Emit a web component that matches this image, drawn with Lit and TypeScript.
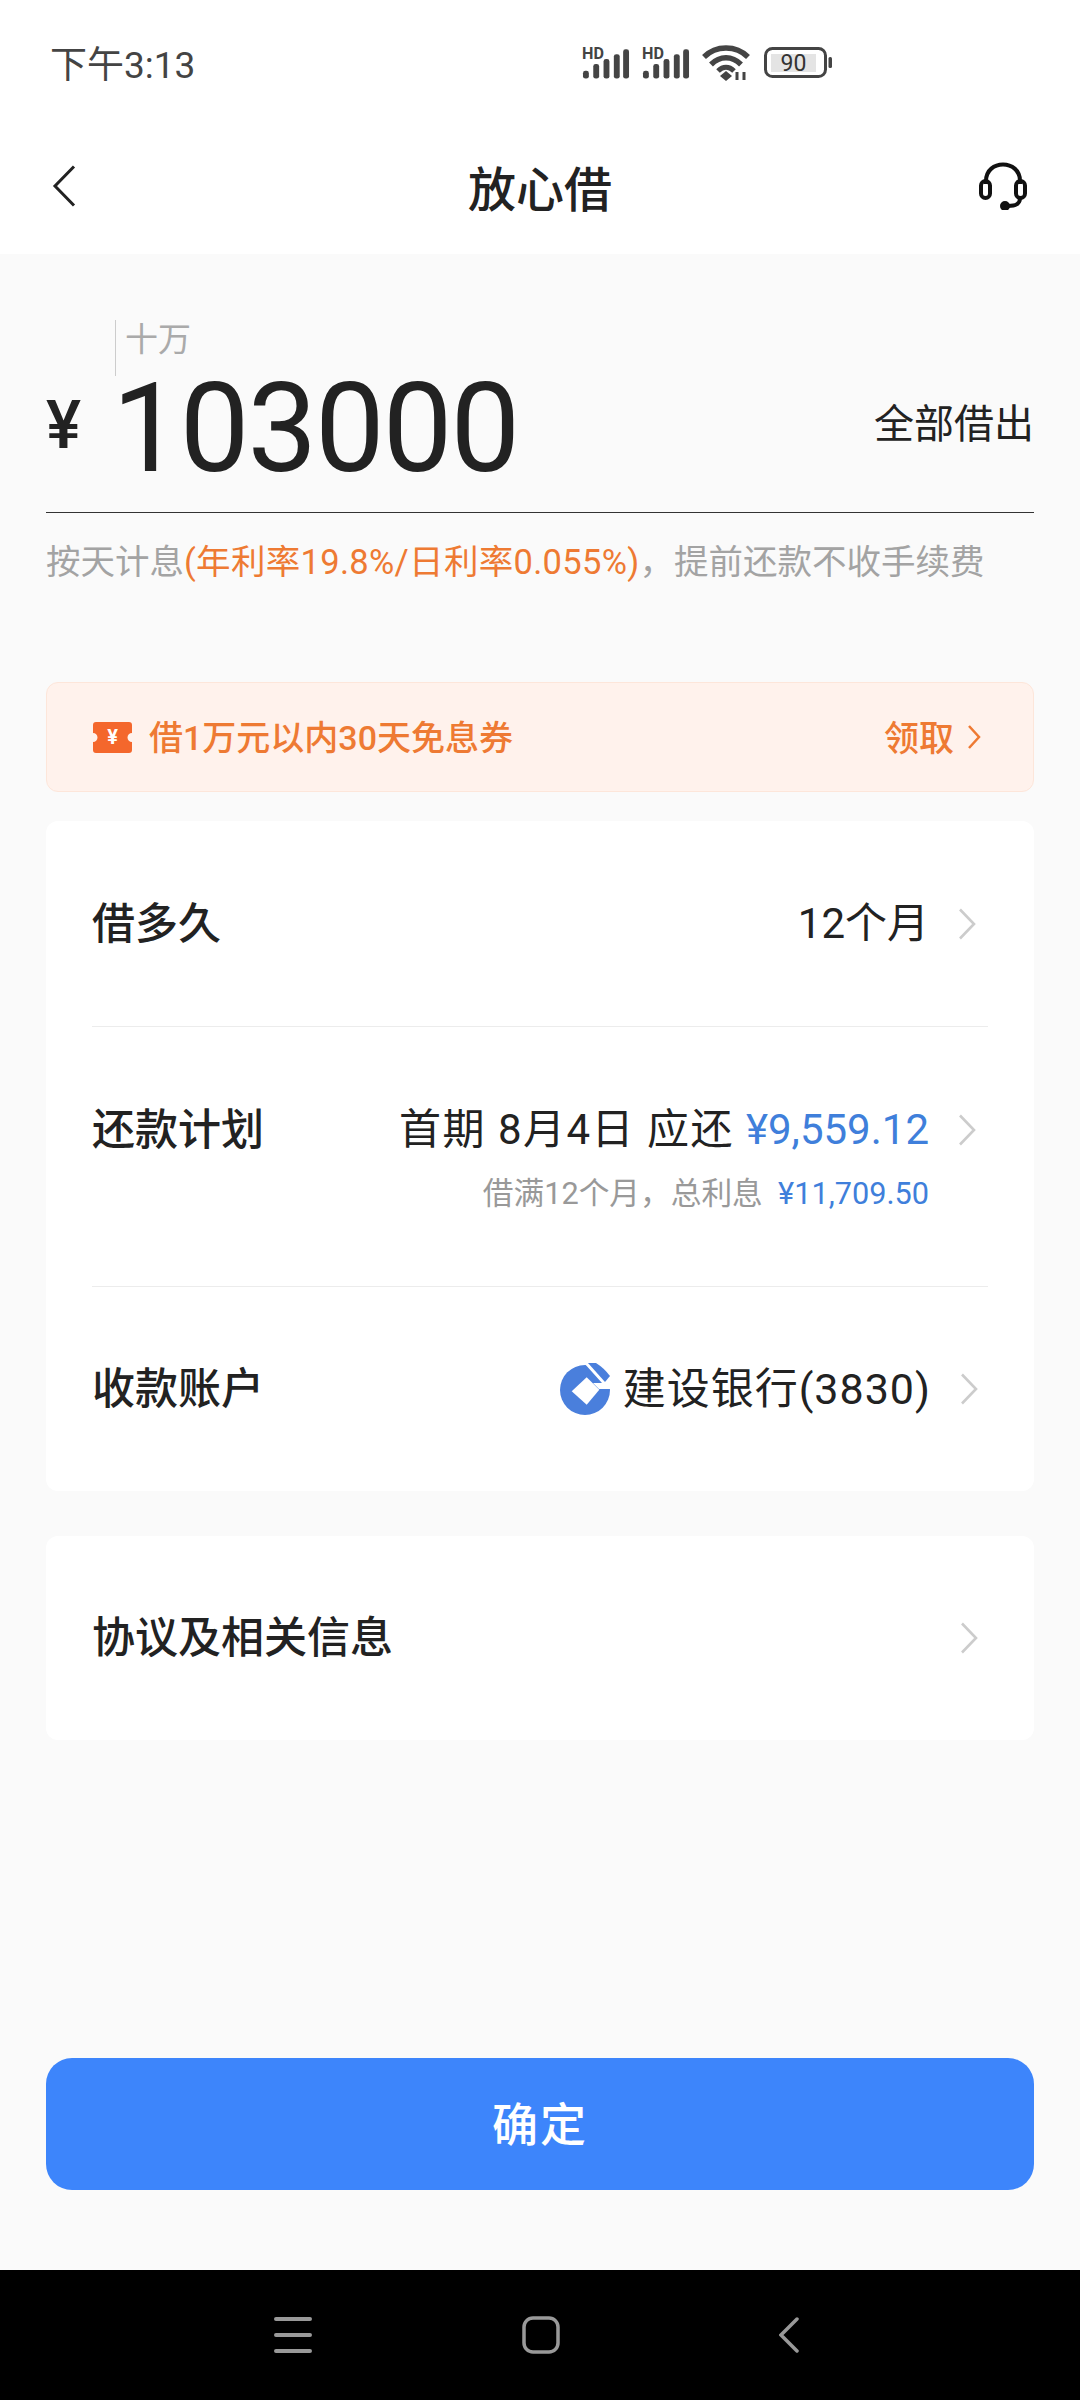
import {LitElement, html, css, svg} from "lit";
import {customElement} from "lit/decorators.js";

const chevron = html`<svg class="chev" width="18" height="32" viewBox="0 0 18 32"><path d="M2 1.500 16 16 2 30.500" fill="none" stroke="#ccc" stroke-width="2.600"/></svg>`;

const signalBars = svg`
    <rect x="1" y="25" width="6" height="8" rx="2.500" fill="#444"/>
    <rect x="11.500" y="18" width="6" height="15" rx="2.500" fill="#444"/>
    <rect x="22" y="13" width="6" height="20" rx="2.500" fill="#444"/>
    <rect x="32.500" y="8" width="6" height="25" rx="2.500" fill="#444"/>
    <rect x="42" y="3" width="6" height="30" rx="2.500" fill="#444"/>
    <text x="0" y="13" font-family="Roboto, sans-serif" font-weight="700" font-size="16.500" fill="#444">HD</text>`;

@customElement("app-root")
export class AppRoot extends LitElement {
    static styles = css`
        :host {
            display: flex;
            flex-direction: column;
            width: 1080px;
            height: 2400px;
            background: #fafafa;
            font-family: Roboto, "Noto Sans CJK SC", sans-serif;
            color: #222;
        }

        .top {
            background: #fff;
            height: 254px;
            flex: none;
        }

        .status {
            display: flex;
            align-items: center;
            height: 126px;
            box-sizing: border-box;
            padding-left: 50px;
            color: #444;
            font-size: 37px;
        }

        .status .time {
            margin-bottom: 3px;
        }

        .status-icons {
            display: flex;
            align-items: center;
            margin-left: 387px;
            gap: 12px;
        }

        .status-icons .signal {
            margin-bottom: 6px;
        }

        .status-icons .battery {
            margin-left: 2px;
        }

        .nav {
            display: grid;
            grid-template-columns: 1fr auto 1fr;
            align-items: center;
            height: 124px;
            box-sizing: border-box;
            padding: 0 52px 5px 52px;
        }

        .nav .support {
            justify-self: end;
        }

        .title {
            font-size: 48px;
            font-weight: 500;
        }

        .main {
            flex: 1;
            display: flex;
            flex-direction: column;
            padding: 0 46px;
        }

        .amount {
            position: relative;
            display: flex;
            align-items: flex-end;
            height: 259px;
            padding-bottom: 38px;
            box-sizing: border-box;
            border-bottom: 1.500px solid #333;
        }

        .cursor {
            position: absolute;
            left: 69px;
            top: 66px;
            width: 1px;
            height: 56px;
            background: #ccc;
        }

        .unit {
            position: absolute;
            left: 79px;
            top: 64px;
            font-size: 33px;
            line-height: 44px;
            color: #aaa;
        }

        .yen {
            font-size: 66px;
            font-weight: 500;
            line-height: 62px;
            margin-bottom: 17px;
            width: 66px;
        }

        .digits {
            font-size: 124px;
            line-height: 90px;
            letter-spacing: -2px;
            font-weight: 400;
        }

        .all {
            margin-left: auto;
            font-size: 40px;
            line-height: 62px;
            margin-bottom: 18px;
        }

        .rate {
            font-size: 34.500px;
            line-height: 50px;
            margin-top: 24px;
            color: #a3a3a3;
            white-space: nowrap;
        }

        .rate b {
            font-weight: 400;
            color: #ee7a33;
            letter-spacing: 0.300px;
        }

        .coupon {
            display: flex;
            align-items: center;
            height: 110px;
            box-sizing: border-box;
            margin-top: 95px;
            padding: 0 52px 0 46px;
            background: #fff2ec;
            border: 1.500px solid #fde6da;
            border-radius: 12px;
            color: #ee7a33;
            font-size: 34px;
            font-weight: 500;
        }

        .coupon span {
            margin-bottom: 4px;
        }

        .coupon svg.ticket {
            margin-right: 17px;
        }

        .coupon .get {
            margin-left: auto;
            margin-right: 13px;
            font-size: 35px;
        }

        .card {
            background: #fff;
            border-radius: 12px;
            padding: 0 46px;
        }

        .card.first {
            margin-top: 29px;
        }

        .card.second {
            margin-top: 45px;
        }

        .row {
            display: flex;
            align-items: center;
            height: 204px;
            border-bottom: 1.500px solid #ececec;
            box-sizing: border-box;
        }

        .row.how-long {
            height: 206px;
        }

        .row:last-child {
            border-bottom: none;
        }

        .row.plan {
            height: 260px;
            align-items: flex-start;
            padding-top: 75px;
        }

        .label {
            font-size: 43px;
            font-weight: 500;
            line-height: 56px;
        }

        .right {
            margin-left: auto;
            display: flex;
            align-items: center;
            font-size: 42px;
            line-height: 56px;
        }

        .right .chev {
            margin-left: 29px;
            margin-right: 12px;
        }

        .right.account .chev {
            margin-right: 10px;
        }

        .bank-name {
            font-size: 43px;
            letter-spacing: 1px;
        }

        .blue {
            color: #3f7fdb;
        }

        .plan-col {
            margin-left: auto;
            display: grid;
            grid-template-columns: auto auto;
            justify-items: end;
            row-gap: 15px;
        }

        .plan-col .chev {
            margin-left: 29px;
            margin-right: 12px;
            align-self: center;
        }

        .plan-main {
            font-size: 42px;
            line-height: 56px;
            white-space: pre;
        }

        .plan-main .due {
            letter-spacing: 1.500px;
        }

        .plan-sub {
            font-size: 30.700px;
            line-height: 42px;
            color: #999;
            white-space: pre;
        }

        .bank {
            display: block;
            margin-right: 13px;
        }

        .confirm {
            margin-top: auto;
            margin-bottom: 80px;
            height: 132px;
            box-sizing: border-box;
            padding-bottom: 6px;
            display: flex;
            align-items: center;
            justify-content: center;
            background: #3d85fb;
            border-radius: 26px;
            color: #fff;
            font-size: 46px;
            font-weight: 500;
            letter-spacing: 2px;
        }

        .softkeys {
            flex: none;
            height: 130px;
            box-sizing: border-box;
            padding-left: 274px;
            background: #000;
            display: flex;
            align-items: center;
            gap: 210px;
        }

        .softkeys .back {
            margin-left: 9px;
        }
    `;

    render() {
        return html`
            <div class="top">
                <div class="status">
                    <span class="time">下午3:13</span>
                    <div class="status-icons">
                        <svg class="signal" width="48" height="41" viewBox="0 -6 49 41">${signalBars}</svg>
                        <svg class="signal" width="48" height="41" viewBox="0 -6 49 41">${signalBars}</svg>
                        <svg width="48" height="36" viewBox="0 0 48 36">
                            <path d="M2 12C14 0 34 0 46 12" fill="none" stroke="#444" stroke-width="5.500"/>
                            <path d="M9 19.500C18 10.500 30 10.500 39 19.500" fill="none" stroke="#444" stroke-width="5.500"/>
                            <path d="M16 26C21 21 27 21 32 26" fill="none" stroke="#444" stroke-width="5"/>
                            <path d="M24 26l6 5-6 5-6-5z" fill="#444"/>
                            <path d="M35 27v8M42 27v8" stroke="#444" stroke-width="3"/>
                        </svg>
                        <svg class="battery" width="68" height="32" viewBox="0 0 68 32">
                            <rect x="1.500" y="1.500" width="60" height="28" rx="7" fill="#fff" stroke="#444" stroke-width="3"/>
                            <rect x="7" y="7" width="45" height="18" fill="#e4e4e4"/>
                            <text x="29.500" y="24" text-anchor="middle" font-family="Roboto, sans-serif" font-size="23" fill="#333">90</text>
                            <rect x="64.500" y="10" width="3.500" height="11" rx="1.500" fill="#444"/>
                        </svg>
                    </div>
                </div>
                <div class="nav">
                    <svg width="24" height="42" viewBox="0 0 24 42"><path d="M22 1.500 3 21l19 19.500" fill="none" stroke="#222" stroke-width="3"/></svg>
                    <span class="title">放心借</span>
                    <svg class="support" width="50" height="48" viewBox="0 0 50 48" fill="none" stroke="#111" stroke-width="4">
                        <path d="M8 22V19C8 -3 42 -3 42 19V22"/>
                        <rect x="3" y="19" width="9" height="17" rx="4.500"/>
                        <rect x="38" y="19" width="9" height="17" rx="4.500"/>
                        <path d="M42 36c0 6-4 8-12 8"/>
                        <circle cx="27" cy="44" r="3" fill="#111"/>
                    </svg>
                </div>
            </div>
            <div class="main">
                <div class="amount">
                    <div class="cursor"></div>
                    <div class="unit">十万</div>
                    <span class="yen">¥</span>
                    <span class="digits">103000</span>
                    <span class="all">全部借出</span>
                </div>
                <div class="rate">按天计息<b>(年利率19.8%/日利率0.055%)</b>，提前还款不收手续费</div>
                <div class="coupon">
                    <svg class="ticket" width="39" height="31" viewBox="0 0 39 31">
                        <path d="M3 0H36a3 3 0 0 1 3 3V11a4.500 4.500 0 0 0 0 9V28a3 3 0 0 1-3 3H3a3 3 0 0 1-3-3V20a4.500 4.500 0 0 0 0-9V3a3 3 0 0 1 3-3z" fill="#f4672c"/>
                        <text x="19.500" y="22" text-anchor="middle" font-family="Roboto, sans-serif" font-size="20" font-weight="700" fill="#fff">¥</text>
                    </svg>
                    <span>借1万元以内30天免息券</span>
                    <span class="get">领取</span>
                    <svg width="14" height="26" viewBox="0 0 14 26"><path d="M2 2l10 11L2 24" fill="none" stroke="#ee7a33" stroke-width="2.500"/></svg>
                </div>
                <div class="card first">
                    <div class="row how-long">
                        <span class="label">借多久</span>
                        <div class="right">12个月${chevron}</div>
                    </div>
                    <div class="row plan">
                        <span class="label">还款计划</span>
                        <div class="plan-col">
                            <div class="plan-main"><span class="due">首期 8月4日 应还 </span><span class="blue">¥9,559.12</span></div>
                            ${chevron}
                            <div class="plan-sub">借满12个月，总利息  <span class="blue">¥11,709.50</span></div>
                            <div></div>
                        </div>
                    </div>
                    <div class="row">
                        <span class="label">收款账户</span>
                        <div class="right account">
                            <svg class="bank" width="50" height="52" viewBox="0 0 50 52">
                                <circle cx="25" cy="27" r="25" fill="#4a7fdc"/>
                                <path d="M24 0 42 20H33L39 26H52V0Z" fill="#fff"/>
                                <path d="M26.700 14.300 39.300 26.700 26.700 41.700 11.700 28.300Z" fill="#fff"/>
                                <path d="M28 0H36Q44 5 50 13L45 19Z" fill="#4a7fdc"/>
                            </svg>
                            <span class="bank-name">建设银行(3830)</span>${chevron}
                        </div>
                    </div>
                </div>
                <div class="card second">
                    <div class="row">
                        <span class="label">协议及相关信息</span>
                        <div class="right account">${chevron}</div>
                    </div>
                </div>
                <div class="confirm">确定</div>
            </div>
            <div class="softkeys">
                <svg width="38" height="36" viewBox="0 0 38 36" stroke="#999" stroke-width="4" stroke-linecap="round"><path d="M2 2H36M2 18H36M2 34H36"/></svg>
                <svg width="38" height="38" viewBox="0 0 38 38"><rect x="2" y="2" width="34" height="34" rx="9" fill="none" stroke="#999" stroke-width="3.500"/></svg>
                <svg class="back" width="20" height="36" viewBox="0 0 20 36"><path d="M18 2 2 18l16 16" fill="none" stroke="#999" stroke-width="3.500" stroke-linecap="round"/></svg>
            </div>
        `;
    }
}
